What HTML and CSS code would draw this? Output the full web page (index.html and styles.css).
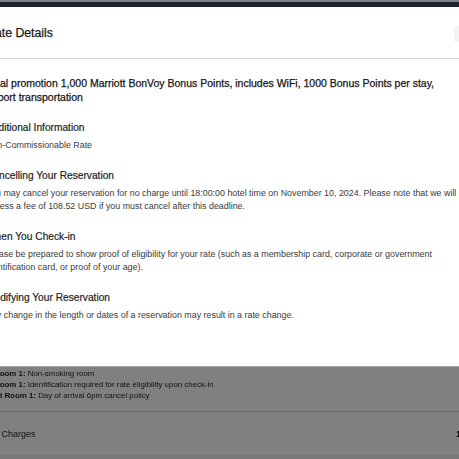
FILE: index.html
```html
<!DOCTYPE html>
<html lang="en">
<head>
<meta charset="utf-8">
<title>Rate Details</title>
<link rel="stylesheet" href="styles.css">
</head>
<body>
<div class="page">
  <div class="nav"></div>
  <ul class="rooms">
    <li><b>Room 1:</b> Non-smoking room</li>
    <li><b>Room 1:</b> Identification required for rate eligibility upon check-in</li>
    <li class="long"><b>Standard Room 1:</b> Day of arrival 6pm cancel policy</li>
  </ul>
  <div class="charges">
    <span class="charges-label">Total Charges</span>
    <span class="charges-value">108.52 USD</span>
  </div>
  <div class="footer"></div>
</div>
<div class="modal" role="dialog" aria-label="Rate Details">
  <div class="modal-header">
    <h2 class="modal-title">Rate Details</h2>
    <button class="close" aria-label="Close"></button>
  </div>
  <div class="modal-body">
    <p class="promo">Total promotion 1,000 Marriott BonVoy Bonus Points, includes WiFi, 1000 Bonus Points per stay, airport transportation</p>
    <section class="section">
      <h3>Additional Information</h3>
      <p>Non-Commissionable Rate</p>
    </section>
    <section class="section">
      <h3>Cancelling Your Reservation</h3>
      <p>You may cancel your reservation for no charge until 18:00:00 hotel time on November 10, 2024. Please note that we will assess a fee of 108.52 USD if you must cancel after this deadline.</p>
    </section>
    <section class="section">
      <h3>When You Check-in</h3>
      <p>Please be prepared to show proof of eligibility for your rate (such as a membership card, corporate or government identification card, or proof of your age).</p>
    </section>
    <section class="section">
      <h3>Modifying Your Reservation</h3>
      <p>Any change in the length or dates of a reservation may result in a rate change.</p>
    </section>
  </div>
</div>
</body>
</html>
```

FILE: styles.css
```css
html, body {
  margin: 0;
  padding: 0;
  width: 459px;
  height: 459px;
  overflow: hidden;
  background: #808080;
  font-family: "Liberation Sans", Arial, Helvetica, sans-serif;
}

/* page behind the modal, shown dimmed */
.page {
  position: relative;
  height: 459px;
  background: #808080;
  color: #111111;
}

.nav {
  margin-top: 2px;
  height: 5px;
  background: #1c232c;
}

.rooms {
  list-style: none;
  margin: 361px 0 0 -6px;
  padding: 0 0 10px 0;
  font-size: 7.9px;
  line-height: 11px;
  border-bottom: 1px solid #6b6b6b;
  will-change: transform;
}

.rooms li {
  white-space: nowrap;
}

.rooms li.long {
  margin-left: -26px;
}

.charges {
  display: flex;
  align-items: center;
  height: 43px;
  margin-left: -20px;
  font-size: 9px;
  will-change: transform;
}

.charges-label {
  width: 476px;
  flex: none;
}

.charges-value {
  font-weight: 700;
  color: #000;
  white-space: nowrap;
}

.footer {
  height: 10px;
  background: #787878;
}

.modal {
  position: absolute;
  top: 7px;
  left: -34px;
  width: 540px;
  height: 359px;
  background: #ffffff;
  box-shadow: 0 1px 0 #a8a8a8;
  color: #1a1a1a;
}

.modal-header {
  display: flex;
  align-items: center;
  height: 51px;
  padding: 0 20px;
  border-bottom: 1px solid #d6d6d6;
}

.modal-title {
  margin: 0;
  font-size: 12.3px;
  font-weight: 400;
  color: #1a1a1a;
  -webkit-text-stroke: 0.25px #1a1a1a;
}

.close {
  margin-left: auto;
  width: 32px;
  height: 16px;
  margin-top: 2px;
  padding: 0;
  border: 0;
  border-radius: 3px;
  background: #f3f3f3;
}

.modal-body {
  padding: 17px 44px 0 20px;
}

.promo {
  margin: 0;
  font-size: 10.5px;
  line-height: 14px;
  color: #161616;
  -webkit-text-stroke: 0.25px #161616;
}

.section {
  margin-top: 17px;
}

.section h3 {
  margin: 0 0 4px 0;
  font-size: 10.2px;
  line-height: 14px;
  font-weight: 400;
  color: #1e1e1e;
  -webkit-text-stroke: 0.2px #1e1e1e;
}

.section p {
  margin: 0;
  font-size: 8.9px;
  line-height: 13px;
  color: #3a3a3a;
}
```
